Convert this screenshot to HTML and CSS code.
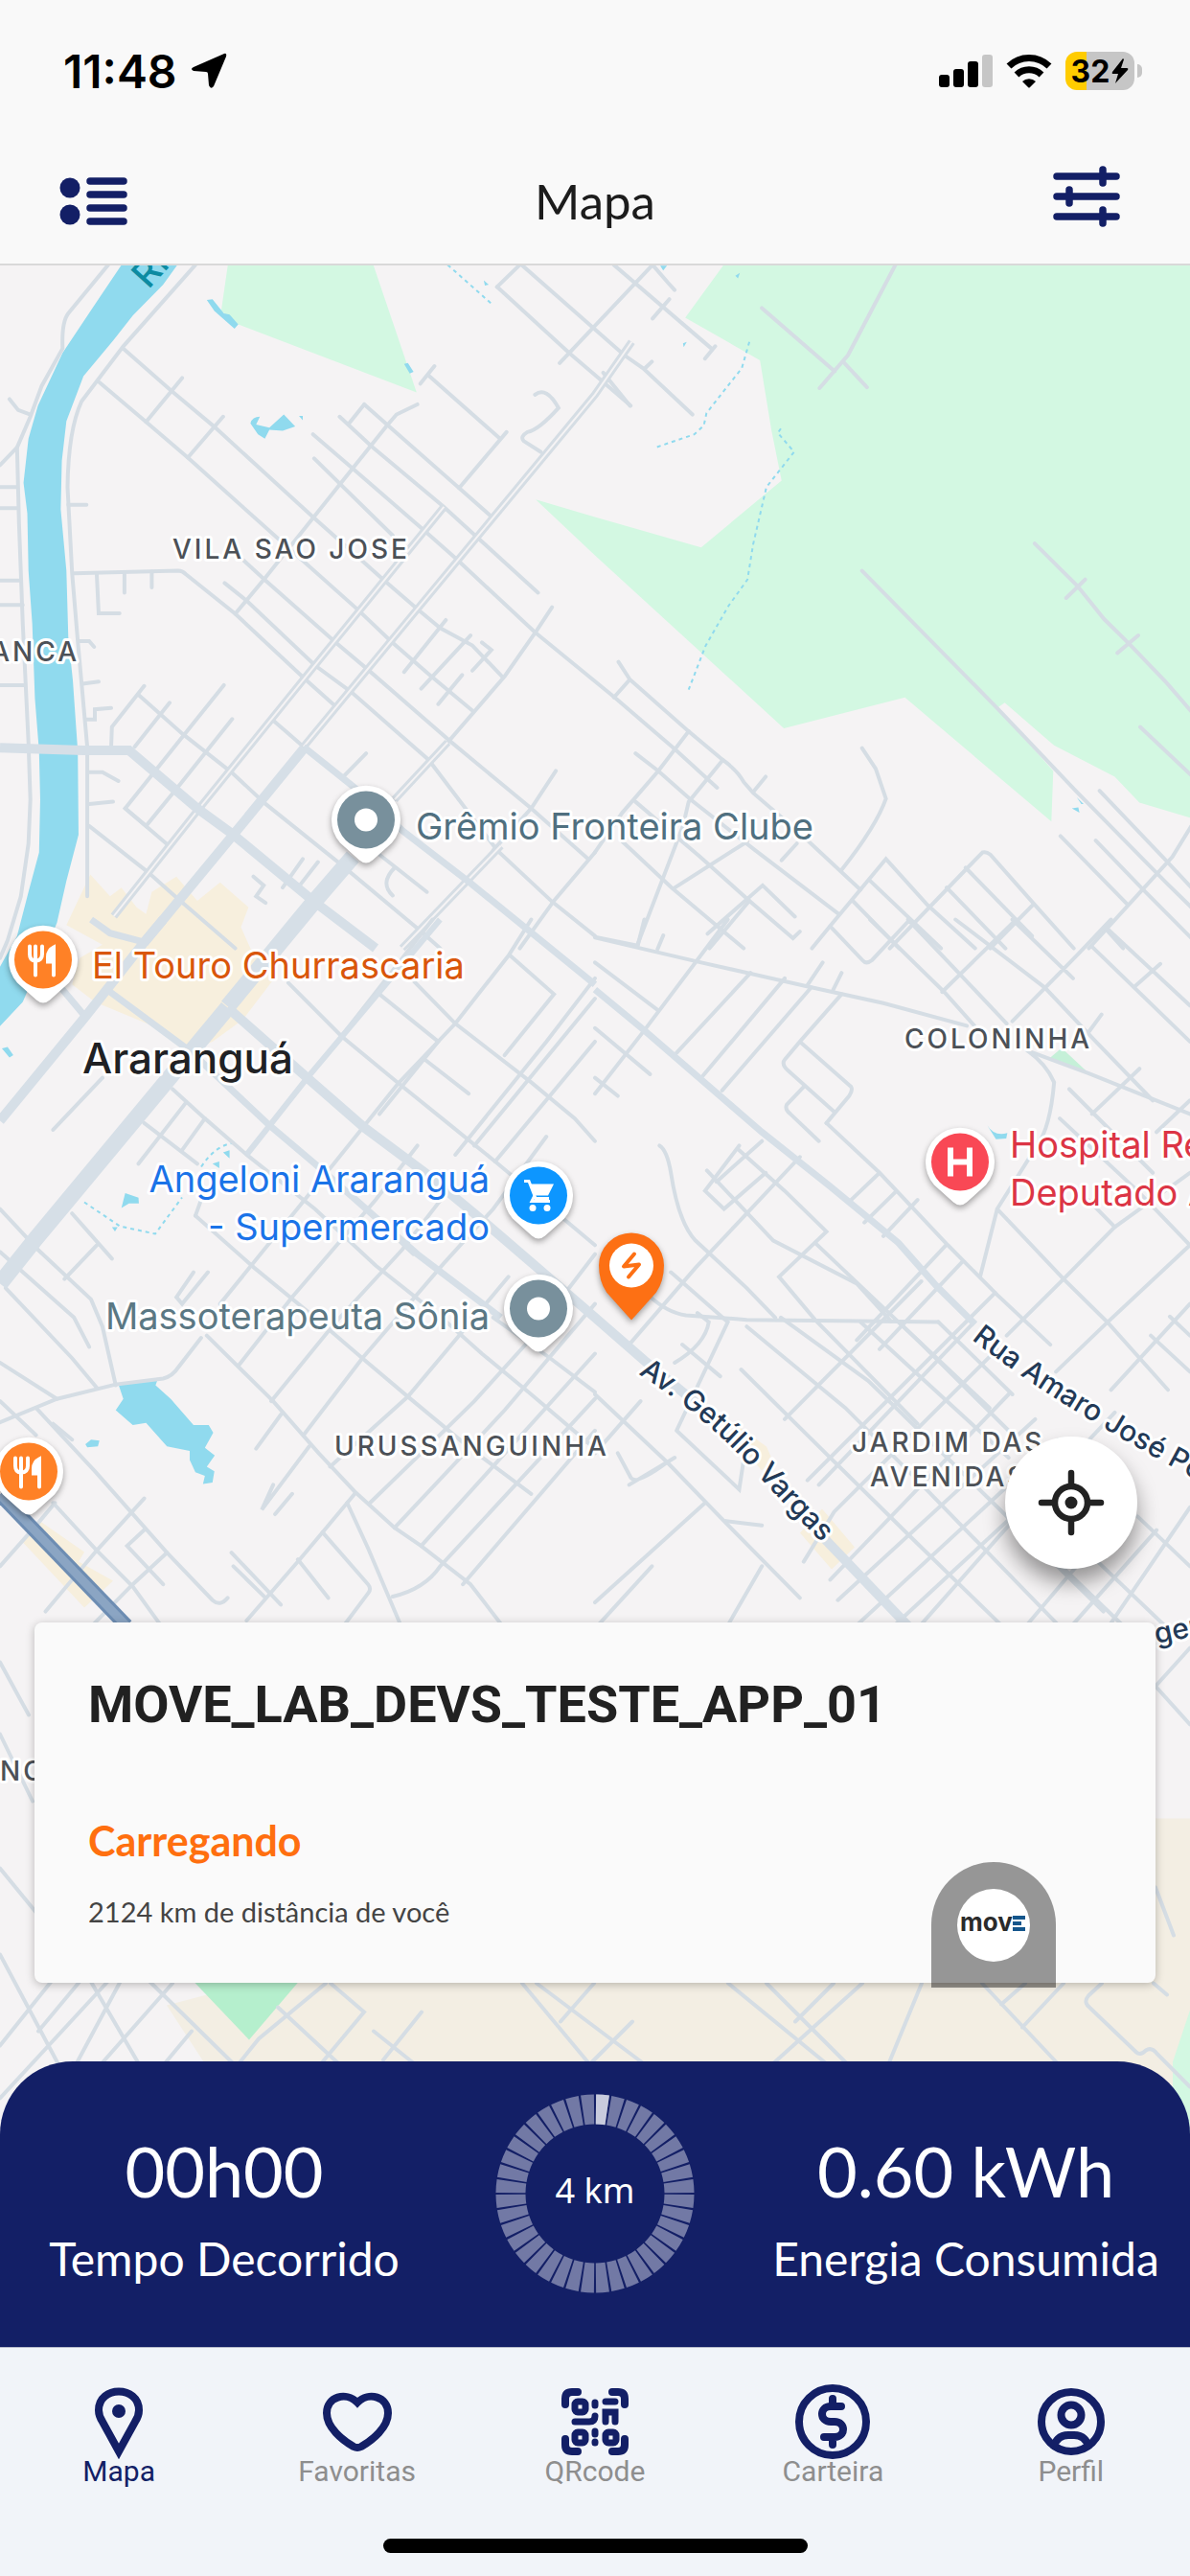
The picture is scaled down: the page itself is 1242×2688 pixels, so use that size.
FILE: index.html
```
<!DOCTYPE html>
<html lang="pt-br">
<head>
<meta charset="UTF-8" />
<meta name="viewport" content="width=device-width, initial-scale=1" />
<title>Mapa</title>
<link rel="stylesheet" href="styles.css">
</head>
<body>
  <div class="app">
    <div class="status-bar">
      <div class="status-left">
        <span class="time">11:48</span>
        <svg width="38" height="38" viewBox="0 0 38 38"><path d="M35 1 Q38 0 37 4 L24 35 Q21 39 19 34 L18 22 Q18 20 16 20 L3 19 Q-1 17 3 15Z" fill="#000" /></svg>
      </div>
      <div class="status-right">
        <svg width="56" height="36" viewBox="0 0 56 36">
          <rect x="0" y="22" width="11" height="13" rx="3" />
          <rect x="15" y="16" width="11" height="19" rx="3" />
          <rect x="30" y="8" width="11" height="27" rx="3" />
          <rect x="45" y="1" width="11" height="34" rx="3" fill="#c6c6c6" />
        </svg>
        <svg width="48" height="36" viewBox="0 0 48 36">
          <path d="M3 13 A30 30 0 0 1 45 13" fill="none" stroke="#000" stroke-width="7" />
          <path d="M11 22 A19 19 0 0 1 37 22" fill="none" stroke="#000" stroke-width="7" />
          <path d="M17 29 A10 10 0 0 1 31 29 L25 35 Q24 36 23 35Z" />
        </svg>
        <span class="battery">
          <span class="battery-level">32</span>
          <svg width="18" height="26" viewBox="0 0 18 26"><path d="M12 0 L1 14 Q0 16 2 16 H7 L4 26 L17 12 Q18 10 16 10 H10 L13 1Z" /></svg>
        </span>
      </div>
    </div>

    <header class="header">
      <button class="icon-btn" aria-label="Lista">
        <svg width="72" height="72" viewBox="0 0 72 72">
          <g fill="#131f66"><circle cx="11" cy="27" r="10.5" /><circle cx="11" cy="55" r="10.5" /></g>
          <path d="M32 20 H67 M32 34 H67 M32 48 H67 M32 62 H67" stroke="#131f66" stroke-width="7.5" stroke-linecap="round" />
        </svg>
      </button>
      <h1>Mapa</h1>
      <button class="icon-btn" aria-label="Filtros">
        <svg width="72" height="72" viewBox="0 0 72 72">
          <path d="M5 15 H67 M5 36 H67 M5 57 H67 M53 8 V22 M18 29 V43 M53 50 V64" stroke="#131f66" stroke-width="7.5" stroke-linecap="round" />
        </svg>
      </button>
    </header>

    <main class="map">
      <svg class="map-canvas" viewBox="0 277 1242 1951" preserveAspectRatio="xMidYMid slice" role="img" aria-label="Mapa de Araranguá">
        <defs>
          <path id="pin" d="M-27 24 L-7 42 Q0 48 7 42 L27 24 A36 36 0 1 0 -27 24Z" />
          <g id="fork" fill="none" stroke="#fff" stroke-width="4" stroke-linecap="round">
            <path d="M-14 -14 V-6 Q-14 1 -8 1 Q-1 1 -1 -6 V-14 M-8 -14 V16" />
            <path d="M11 16 V-13 Q5 -10 5 -3 V2 H11" fill="#fff" />
          </g>
          <path id="getulio" d="M666 1434 Q735 1478 780 1528 T870 1622" />
          <path id="amaro" d="M1014 1398 Q1110 1474 1290 1566" />
        </defs>

        <rect y="270" width="1242" height="1970" fill="#f5f3f4" />

        <!-- parks and blocks -->
        <g transform="translate(0 270) scale(.396 .4592)">
          <path class="park" d="M603 0 L583 120 L628 150 L1098 305 L978 0Z" />
          <path class="park" d="M1920 0 L1806 135 L2003 232 L2033 390 L2060 505 L1848 657 L1568 588 L1412 548 L1568 675 L1853 900 L2066 1068 L2385 998 L2771 1280 L2776 1165 L2628 1022 L2648 1010 L2778 1107 L2938 1178 L3003 1237 L3140 1272 V0Z" />
          <path class="block" d="M238 1400 L290 1450 L320 1430 L360 1475 L385 1490 L400 1440 L465 1405 L520 1460 L580 1418 L655 1475 L635 1520 L660 1568 L720 1640 L640 1730 L560 1780 L500 1800 L390 1740 L250 1690 L190 1650 L210 1590 L270 1560 L175 1515Z" />
        </g>
        <path class="block" d="M772 1490 L800 1510 L806 1524 L795 1535 L770 1505Z M858 1575 L892 1615 L868 1638 L835 1600Z" />
        <path class="block" d="M42 1588 L88 1620 L82 1630 L118 1650 L88 1678 L24 1610Z" />
        <path fill="#c5f0d8" d="M1108 1094 L1138 1122 L1094 1106Z" />
        <path fill="#f3eee3" d="M1206 1898 H1242 V2240 H270 L174 2093 L300 2060 H1206Z" />
        <path fill="#b5efcd" d="M202 2068 H312 L260 2129Z" />
        <path class="park" d="M1242 2098 L1224 2152 V2240 H1242Z" />

        <!-- water -->
        <g class="water" transform="translate(0 270) scale(.396 .4592)">
          <path d="M332 0 L250 105 L165 215 L100 335 L75 410 L62 510 L72 580 L75 710 L85 830 L92 1000 L103 1120 L106 1230 L103 1350 L75 1440 L45 1540 L0 1610 V1745 L60 1690 L150 1510 L175 1415 L207 1310 L205 1120 L192 960 L180 860 L175 710 L160 570 L163 460 L175 370 L220 268 L300 185 L350 130 L430 60 L480 0Z" />
          <path d="M545 95 L560 93 L590 125 L605 128 L628 150 L618 160 L565 120Z M1065 240 L1075 238 L1090 258 L1080 262Z" />
          <path d="M660 375 Q665 360 685 360 L675 378 L710 385 L748 355 L778 382 L745 392 L710 390 L698 410 L680 400Z M788 358 H798 V368Z" />
          <path d="M1275 50 L1288 60 L1278 62Z M1740 17 H1758 L1748 28Z M1938 40 L1950 33 L1945 46Z M1800 193 L1810 190 L1802 202Z M2825 1250 L2842 1248 L2845 1260Z M2838 1225 L2856 1240 L2850 1240Z" />
        </g>
        <g class="water" transform="translate(0 960) scale(.396 .4719)">
          <path d="M313 1030 L415 1018 L410 1030 L450 1060 L510 1118 H550 L562 1135 L540 1168 L566 1185 L545 1210 L565 1220 L560 1245 L535 1248 L540 1230 L515 1222 L500 1195 L500 1175 L440 1165 L385 1113 L350 1118 L305 1085 L325 1060Z" />
          <path d="M225 1160 L240 1150 L262 1152 L258 1165 L230 1167Z M320 638 L330 605 L365 615 L366 628 L340 628Z M5 285 L20 282 L35 300 L25 305Z M295 680 H310 L303 690Z M560 540 L578 535 V550Z M588 515 L605 510 V528Z" />
          <path d="M2602 455 Q2620 480 2655 472 L2652 484 L2625 486Z" />
        </g>
        <g class="creek" transform="translate(0 270) scale(.396 .4592)">
          <path d="M1180 15 L1295 103 M1975 190 L1955 250 L1900 310 L1862 352 L1855 380 L1830 400 L1728 430" />
          <path d="M2058 387 L2050 397 L2093 440 L2020 520 L1985 650 L1970 730 L1920 790 L1860 880 L1815 980" />
        </g>
        <path class="creek" d="M88 1255 L125 1280 L162 1288 L190 1250 M210 1218 Q225 1195 245 1193" />

        <!-- streets, north half -->
        <g class="streets" transform="translate(0 270) scale(.396 .4592)">
          <path d="M285 15 L180 125 Q162 145 165 205 L110 290 L80 360 L45 430 L50 600 L60 830 L75 1100 L80 1230 L75 1330 L55 1450 L20 1550 L0 1590" />
          <path d="M515 15 L325 200 L215 325 Q180 390 178 520 L190 715 L205 870 L230 1110 L230 1450" />
          <path d="M325 205 L450 300 L565 383 L825 588 L1010 730 L1100 797 L1160 840 L1245 880 L1325 952" />
          <path d="M262 282 L385 372 L495 453 L730 635 L945 800 L1030 870 L1130 945 L1245 1028" />
          <path d="M195 716 L470 710 Q480 710 490 718 L620 808 L805 957 L880 1015" />
          <path d="M640 685 L697 730 L885 873 L970 935 L1190 1100 L1400 1250 L1550 1365" />
          <path d="M592 738 L650 778 L830 925 L925 985 L1130 1140 L1310 1345 L1455 1462 L1568 1540" />
          <path d="M365 992 L480 1080 L610 1168 L700 1240 L895 1375 L1110 1530 L1160 1568 M720 1050 L800 1110" />
          <path d="M825 400 L930 478 L1120 620 L1205 685 L1410 850 L1620 998 L1778 1115 L1890 1203" />
          <path d="M895 360 L980 428 L1170 565 L1255 632 L1418 760 M960 332 L1020 378 L1210 522 L1290 583 M828 455 L1035 630 M1128 265 L1318 410" />
          <path d="M235 1290 L390 1395 L455 1445 L620 1568 M330 1250 L445 1335 M1310 65 L1500 215 L1568 265 L1662 335 M1375 15 L1645 220 L1695 250 L1825 355" />
          <path d="M480 272 L385 372 M588 360 L495 453 M1100 332 L1045 355 L1020 380 L890 520 L700 725 L620 808 M1370 15 L1310 65 M1720 15 L1475 238 M1145 245 L1108 285" />
          <path d="M380 972 L295 1065 L293 1110 M447 1010 L355 1110 M590 970 L330 1250 L385 1290 L475 1195 L612 1047 M960 332 L920 375" />
          <path d="M1175 822 L1065 940 M1240 857 L1110 978 M1218 947 L1155 1013 M1455 793 L1415 845 L1330 950 L1185 1095 L1040 1230" />
          <path d="M1465 1165 L1400 1250 L1300 1345 M965 1125 L905 1178 M1568 1350 L1460 1460 L1370 1568 M1335 395 L1210 522" />
          <path d="M1410 310 Q1440 290 1472 340 Q1420 390 1390 395 Q1370 405 1380 415 L1425 440 M1270 873 L1295 890 L1245 937" />
          <path d="M0 520 H45 M0 568 H45 M0 732 H55 M0 788 H60 M0 970 H65 M180 560 H228 M255 718 L260 807 H315 M328 718 V760 M400 712 V748 M210 870 H235 L248 883 M218 967 L260 962 M228 1048 H250 V1025 L293 1022 M0 470 L45 430 M80 355 L48 345 L25 320" />
          <path d="M235 1168 H270 L312 1188 M235 1240 L298 1235 M668 1405 L695 1425 L675 1450 L700 1465 M798 1365 L745 1430 M838 1372 L790 1425 M1040 1385 Q1000 1420 1035 1448 M1000 1355 L1125 1440" />
          <path d="M1618 15 L1875 205 M1764 93 L1720 137 M1885 200 L1858 228 M1720 15 L1760 55 L1778 72 M1590 260 L1660 335 M1700 250 L1718 235" />
          <path d="M2008 113 L2200 257 M2360 15 L2235 220 L2160 295 M2222 235 L2285 293" />
          <path d="M2272 710 L2628 1022 L2835 1210 L3075 1420 L3140 1475 M2727 648 L2840 745 L2910 820 L2975 875 L3075 965 L3140 1030 M2860 730 L2810 772 M3000 857 L2945 897 M3005 1065 L3140 1175" />
          <path d="M1630 917 L1660 957 L1618 998 M1660 957 L1815 1075 L1905 1140 Q1945 1165 1960 1190 L1985 1215 L2100 1300 L2268 1435" />
          <path d="M1815 1075 L1735 1165 L1640 1260 L1568 1350 M1905 1140 L1815 1235 L1800 1290 L1680 1560 M1675 1125 L1735 1165 L1820 1230 L1990 1345 L2210 1490 M2018 1178 L1985 1213" />
          <path d="M2272 1113 L2308 1160 L2335 1228 Q2310 1290 2218 1390 M1640 1325 L1770 1430 L1960 1568 M1675 1235 L1845 1360 L1975 1460 L2090 1545 L2108 1530 M1865 1535 L2010 1425 L2095 1496" />
          <path d="M1775 1432 L1970 1325 M1870 1568 L1975 1460 M2140 1568 L2190 1515 L2335 1365 L2445 1470 L2570 1568 M2290 1412 L2480 1568 M2245 1458 L2370 1568 M2060 1368 L2100 1330" />
          <path d="M2345 1568 L2550 1385 L2590 1350 Q2600 1348 2610 1355 L2725 1467 L2830 1568 M2545 1385 L2720 1540 M2495 1430 L2650 1568 M2725 1467 L2610 1568 M2870 1568 L3000 1445 L3090 1360 L3140 1290" />
          <path d="M2795 1313 L2970 1467 M2888 1323 L3010 1432 L3140 1545 M2898 1210 L3075 1370 L3140 1430 M1568 1542 L1680 1562 M2915 1525 L2960 1568" />
        </g>
        <g class="dual" transform="translate(0 270) scale(.396 .4592)">
          <path d="M300 1495 L525 1250 L830 925 L1170 565 M800 1110 L1100 797 L1568 310 L1665 190 M1180 1100 L1040 1230 M1320 1335 L1060 1568" />
          <path class="inner" d="M300 1495 L525 1250 L830 925 L1170 565 M800 1110 L1100 797 L1568 310 L1665 190 M1180 1100 L1040 1230 M1320 1335 L1060 1568" />
        </g>

        <!-- streets, south half -->
        <g class="streets" transform="translate(0 960) scale(.396 .4719)">
          <path d="M760 140 L900 258 L1050 362 L1180 450 L1305 535 L1568 720 M1000 165 L1155 270 L1000 430 M1120 310 L1235 385 M1060 110 L1200 230 L1400 360 L1515 440 L1568 490" />
          <path d="M455 375 L540 440 L650 520 L830 640 L990 765 L1170 885 L1270 960 L1400 1050 L1568 1170 M380 450 L520 540 M515 655 L670 770 L830 880 L955 970 L1075 1055 L1240 1170 L1400 1270" />
          <path d="M950 630 L1090 740 M1300 880 L1450 970 L1568 1045 M545 920 L720 1065 L840 1180 L935 1265 L1040 1345 L1110 1385 L1240 1470 L1330 1568" />
          <path d="M0 640 L100 730 L240 840 L270 900 L305 1030 M0 735 L195 880 L235 945 M15 815 L190 970 L255 1035 M0 980 L150 1060 M0 1065 L95 1140 M95 1080 L250 1220 L345 1310 L440 1400 L560 1505 Q580 1520 600 1500 M140 1290 L255 1395 L350 1475 L430 1568" />
          <path d="M0 1112 L150 1060 L305 1028 L430 1015 Q455 1010 470 990 L530 925 M0 1430 L95 1340 L145 1290 M120 1530 L255 1395 L380 1280 M235 1568 L350 1470 L440 1400 M650 1550 L790 1415 L850 1355 L935 1270" />
          <path d="M975 1290 L1110 1180 L1250 1065 L1390 935 L1568 740 M800 1140 L955 970 L1170 760 L1300 640 L1440 480 M870 1210 L1075 1055 L1240 890 L1340 790 M715 1065 L885 890 L1060 730 L1180 600 M630 985 L770 835 L990 620 L1100 500 M580 850 L735 690 L880 540 L1050 362 L1200 230 L1340 80 L1400 0" />
          <path d="M1040 1345 L1180 1220 L1330 1085 L1568 850 M1110 1385 L1568 960 M1160 1430 L1568 1060 M1220 1470 L1568 1130 M1160 1430 Q1120 1480 1035 1497 M915 1290 L970 1390 L1060 1568 M850 1355 L970 1470 Q980 1480 970 1490 L900 1568 M785 1415 L865 1500" />
          <path d="M900 258 L1140 0 M1200 520 L1440 270 L1568 130 M1250 500 L1568 175 M1305 535 L1568 270 M1345 80 L1460 165 L1330 300 M540 440 L480 510 M490 405 L365 540 M270 350 L140 465 M190 650 L295 750 M255 720 L170 795 M610 1400 L740 1515 M615 1430 L700 1500" />
          <path d="M510 780 L465 835 L480 850 L548 780 M720 1250 L690 1305 L815 1165 M725 1315 L770 1270 M740 1095 L675 1170 M380 1350 L335 1385 L430 1470 M530 620 L515 655 M140 1115 L190 1150" />
        </g>
        <g class="streets" transform="translate(621 960) scale(.396 .4719)">
          <path d="M0 40 L280 95 L570 150 L760 185 L980 235 M1140 290 L1300 340 L1568 430 M140 830 Q190 870 240 875 L400 885 L700 888 L905 890" />
          <path d="M620 15 L705 90 Q715 100 730 90 L830 0 M725 0 L920 160 L1000 235 M825 0 L1085 230 M950 0 L1185 150 L1320 270 L1470 400 M1100 0 L1260 130 M915 160 L1110 0 M1100 225 L1275 75 L1360 0 M1310 60 L1568 270 M1350 20 L1568 190 M1490 98 L1420 150" />
          <path d="M0 385 L130 245 L350 0 M215 295 L410 118 M285 345 L500 130 M335 378 L570 150 M650 165 L540 270 L500 310 Q490 320 510 335 L630 425 M540 270 L675 370 Q680 378 670 390 L610 450 M550 370 L505 410 Q500 420 515 430 L590 490" />
          <path d="M0 240 L145 342 M0 350 L60 390 M170 500 Q190 510 200 560 Q220 670 265 710 L400 815 L475 880 M0 95 L165 200 M380 500 L290 600 L340 640 L450 560 M440 490 L320 580 M295 555 L470 710 L690 805 L780 888 M380 510 L500 600 L610 690 L485 790 L580 885 L850 1115" />
          <path d="M540 525 L400 650 L265 770 L90 940 M580 715 L850 930 L1090 1130 M610 450 L750 560 L930 720 L1060 830 L1200 940 M750 560 L675 620 M795 600 L710 670 M850 620 L760 700 M925 720 L690 930 M970 755 L750 950 M860 800 L500 1105 M1055 825 L560 1240" />
          <path d="M1000 890 L590 1250 M1060 950 L630 1310 L550 1420 M1090 1050 L620 1460 M1160 1105 L640 1505 M1220 1150 L680 1568 M1280 1180 L780 1568 M1370 1090 L1090 1340 L850 1568 M1480 1350 L1250 1568 M1400 1300 L1130 1568 M1568 1300 L1350 1568" />
          <path d="M385 995 L620 1190 L850 1380 L1080 1568 M400 900 L660 1080 L850 1240 L1230 1568 M490 880 L720 1020 L940 1200 L1340 1530 M700 890 L1090 1190 M800 890 L1040 1080 M905 890 L1100 1050 M1300 1400 L1510 1568 M1180 1390 L1400 1568 M1430 1320 L1568 1430" />
          <path d="M1210 360 Q1200 460 1165 500 L1060 640 L1015 790 M1140 290 Q1190 320 1210 360 M1568 560 L1370 680 L1235 795 L1085 920 M1060 640 L1235 795 L1350 890 L1510 1040 M1568 720 L1345 895 L1215 1000 M1568 850 L1360 1040 M1515 878 L1568 920 M1465 920 L1568 1000" />
          <path d="M1568 400 L1480 470 M1435 330 L1310 430 M1335 210 L1300 250 M1250 375 L1470 560 M1225 440 L1430 600 L1568 720 M1370 680 L1300 620 M0 1050 L190 1200 L340 1330 L540 1500 M0 1510 L290 1290 M0 1180 L120 1065 M90 1250 L210 1190 M60 1180 L95 1235 Q110 1250 190 1200" />
          <path d="M0 1568 L150 1430 M345 1568 L440 1430 M200 780 L350 890 L215 1130 M270 870 L300 890 Q290 940 210 980 M230 940 L330 1010 M215 1130 L380 1260 L400 1150 M600 95 L560 145 M650 118 L628 155 M180 35 L165 65 M440 1340 L345 1330 M130 0 L112 60" />
        </g>
        <g class="streets">
          <path d="M0 1735 L30 1790 M0 1810 L34 1880 M0 1950 L90 2060 L188 2228 M0 2040 L100 2228 M60 2060 L0 2135 M130 2060 L40 2228 M0 2190 L120 2060 M180 2070 L30 2240 M150 2062 L260 2170 M200 2120 L110 2228 M90 2060 L40 2120" />
          <path d="M340 2070 L270 2128 L220 2190 M345 2070 L380 2100 L330 2160 M290 2095 L360 2160 M390 2120 L440 2160 M440 2100 L400 2150 M545 2070 L620 2160 M560 2070 L680 2160 M620 2070 L585 2110 M660 2110 L610 2160" />
          <path d="M760 2070 L870 2160 M800 2070 L860 2130 L890 2160 M900 2070 L800 2160 M870 2070 L830 2110 M962 2070 L925 2160 M1025 2070 L1105 2155 M1070 2070 L1045 2092 M1110 2070 L1067 2116 M1206 1970 L1225 2020 M1206 1760 L1242 1720 M1206 1760 L1242 1800" />
          <path d="M1150 2070 L1136 2083 Q1130 2090 1138 2096 L1186 2142 Q1190 2146 1196 2140 Q1202 2136 1208 2144 L1242 2178 M1204 2070 L1218 2082" />
        </g>

        <!-- avenues -->
        <g class="avenue" transform="translate(0 270) scale(.396 .4592)">
          <path class="w8" d="M0 1112 L220 1118 H340 L520 1250 L615 1310 L825 1460 L990 1568 M380 1555 L615 1310 L800 1115" />
          <path class="w5" d="M800 1110 L930 1200 L1060 1300 L1240 1420 L1568 1650" />
          <path class="w13" d="M600 1700 L820 1470 L930 1360" />
        </g>
        <g class="avenue" transform="translate(0 960) scale(.396 .4719)">
          <path class="w5" d="M160 150 L225 215 M240 0 L290 30 L380 50 M290 160 L500 290 L710 455 L830 540 L1100 740 L1320 880" />
          <path class="w8" d="M430 0 L380 50 L225 215 L0 445 M600 195 L810 350 L960 460 L1120 560 L1250 650 L1430 780 L1568 880 L1698 975 L1850 1080" />
          <path class="w8" d="M2140 1340 L2400 1568" />
          <path class="w13" d="M600 195 L95 705 L0 805" />
          <path class="w5" d="M1568 155 L1698 245 L2008 470 L2188 590 L2368 715 L2468 810 L2570 895" />
          <path class="w3" d="M650 520 L810 350 L1160 0" />
        </g>

        <path d="M0 1560 L132 1697" stroke="#6d8db3" stroke-width="15" />
        <path d="M0 1560 L132 1697" stroke="#8ba5c3" stroke-width="9" />

        <!-- labels -->
        <g class="district">
          <text x="180" y="583">VILA SAO JOSE</text>
          <text x="83" y="690" text-anchor="end">BARRANCA</text>
          <text x="944" y="1094">COLONINHA</text>
          <text x="349" y="1519">URUSSANGUINHA</text>
          <text x="889" y="1515">JARDIM DAS</text>
          <text x="908" y="1551">AVENIDAS</text>
          <text x="0" y="1858">NC</text>
        </g>
        <text class="city" x="86" y="1120">Araranguá</text>
        <g class="poi">
          <text x="434" y="876" fill="#507080">Grêmio Fronteira Clube</text>
          <text x="96" y="1021" fill="#d9560b">El Touro Churrascaria</text>
          <text x="511" y="1244" fill="#1a73e8" text-anchor="end">Angeloni Araranguá</text>
          <text x="511" y="1294" fill="#1a73e8" text-anchor="end">- Supermercado</text>
          <text x="511" y="1387" fill="#5b7884" text-anchor="end">Massoterapeuta Sônia</text>
          <text x="1054" y="1208" fill="#dc3545">Hospital Regional</text>
          <text x="1054" y="1258" fill="#dc3545">Deputado Affonso</text>
        </g>
        <g class="road-name">
          <text><textPath href="#getulio">Av. Getúlio Vargas</textPath></text>
          <text><textPath href="#amaro">Rua Amaro José Pereira</textPath></text>
          <text x="1207" y="1716" transform="rotate(-12 1207 1716)">gen</text>
        </g>
        <text class="river-name" x="155" y="303" transform="rotate(-48 155 303)">Rio</text>

        <!-- pins -->
        <g class="pin" transform="translate(382 856)">
          <use href="#pin" /><circle r="30" fill="#78909c" /><circle r="12" fill="#fff" />
        </g>
        <g class="pin" transform="translate(562 1366)">
          <use href="#pin" /><circle r="30" fill="#78909c" /><circle r="12" fill="#fff" />
        </g>
        <g class="pin" transform="translate(45 1002)">
          <use href="#pin" /><circle r="30" fill="#ff8126" /><use href="#fork" />
        </g>
        <g class="pin" transform="translate(30 1536)">
          <use href="#pin" /><circle r="30" fill="#ff8126" /><use href="#fork" />
        </g>
        <g class="pin" transform="translate(562 1248)">
          <use href="#pin" /><circle r="30" fill="#0d96ff" />
          <path d="M-15 -15 H-10 L-3 3 H11" fill="none" stroke="#fff" stroke-width="3" />
          <path d="M-9 -12 H16 L10 0 H-4Z" fill="#fff" />
          <path d="M-4 0 L-7 6 H12" fill="none" stroke="#fff" stroke-width="3" />
          <circle cx="-6" cy="13" r="3.5" fill="#fff" /><circle cx="9" cy="13" r="3.5" fill="#fff" />
        </g>
        <g class="pin" transform="translate(1002 1213)">
          <use href="#pin" /><circle r="30" fill="#f94855" />
          <path d="M-10 -15 V15 M10 -15 V15 M-10 0 H10" stroke="#fff" stroke-width="6" />
        </g>
        <g class="pin charger" transform="translate(659 1321)">
          <path d="M0 57 Q-10 46 -26 28 Q-34 16 -34 0 A34 34 0 0 1 34 0 Q34 16 26 28 Q10 46 0 57Z" />
          <circle r="23" fill="#fff" />
          <path d="M3 -12 L-8 1 L8 -1 L-3 12" fill="none" stroke="#fd7014" stroke-width="4" stroke-linecap="round" stroke-linejoin="round" />
        </g>
      </svg>

      <div class="map-overlay">
        <button class="locate" aria-label="Minha localização">
          <svg width="72" height="72" viewBox="0 0 72 72" fill="none" stroke="#222" stroke-width="6.5" stroke-linecap="round">
            <circle cx="36" cy="36" r="17" />
            <circle cx="36" cy="36" r="6.5" fill="#222" stroke="none" />
            <path d="M36 5 V18 M36 54 V67 M5 36 H18 M54 36 H67" />
          </svg>
        </button>

        <section class="station">
          <h2>MOVE_LAB_DEVS_TESTE_APP_01</h2>
          <p class="station-status">Carregando</p>
          <p class="station-distance">2124 km de distância de você</p>
          <div class="station-brand">
            <svg width="78" height="78" viewBox="0 0 78 78">
              <circle cx="39" cy="39" r="38" fill="#fff" />
              <text x="4" y="45" class="brand-name">mov</text>
              <path d="M59 31 H72 M59 37 H68 M59 43 H72" stroke="#14568c" stroke-width="4" />
            </svg>
          </div>
        </section>
      </div>
    </main>

    <section class="session">
      <div class="metric">
        <strong>00h00</strong>
        <span>Tempo Decorrido</span>
      </div>
      <div class="ring">
        <svg width="208" height="208" viewBox="0 0 208 208" fill="none" stroke-width="31">
          <circle cx="104" cy="104" r="88" pathLength="560" stroke="#7279a5" stroke-dasharray="12 2" stroke-dashoffset="-1" transform="rotate(-90 104 104)" />
          <circle cx="104" cy="104" r="88" pathLength="560" stroke="#c8cbdd" stroke-dasharray="12 548" stroke-dashoffset="-1" transform="rotate(-90 104 104)" />
        </svg>
        <span class="ring-value">4 km</span>
      </div>
      <div class="metric">
        <strong>0.60 kWh</strong>
        <span>Energia Consumida</span>
      </div>
    </section>

    <nav class="tab-bar">
      <div class="tabs">
        <a class="tab active" href="#mapa">
          <svg width="78" height="78" viewBox="-39 -39 78 78">
            <path d="M0 31 L-17 0 Q-21 -6 -21 -12 C-21 -38 21 -38 21 -12 Q21 -6 17 0Z" />
            <circle cy="-11" r="7" class="solid" />
          </svg>
          Mapa
        </a>
        <a class="tab" href="#favoritas">
          <svg width="78" height="78" viewBox="-39 -39 78 78">
            <path d="M0 -20 C-12 -32 -32 -26 -32 -9 C-32 6 -16 19 -4 26 Q0 28 4 26 C16 19 32 6 32 -9 C32 -26 12 -32 0 -20Z" />
          </svg>
          Favoritas
        </a>
        <a class="tab" href="#qrcode">
          <svg width="78" height="78" viewBox="-39 -39 78 78">
            <path d="M-31 -18 V-24 Q-31 -31 -24 -31 H-18 M18 -31 H24 Q31 -31 31 -24 V-18 M31 18 V24 Q31 31 24 31 H18 M-18 31 H-24 Q-31 31 -31 24 V18" />
            <g class="qr">
              <rect x="-21" y="-21" width="11" height="11" rx="3" />
              <rect x="-21" y="11" width="11" height="11" rx="3" />
              <rect x="11" y="11" width="11" height="11" rx="3" />
              <path d="M0 -20 V-17 M0 -6 Q0 0 -6 0 H-21 M0 10 V13 M0 21 V22 M11 -21 H21 M11 0 V-10 H21 V0" />
            </g>
          </svg>
          QRcode
        </a>
        <a class="tab" href="#carteira">
          <svg width="78" height="78" viewBox="-39 -39 78 78">
            <circle r="35" />
            <path d="M9 -16 H-2 C-14 -16 -14 0 -2 0 H2 C14 0 14 16 2 16 H-9 M0 -24 V-16 M0 16 V24" />
          </svg>
          Carteira
        </a>
        <a class="tab" href="#perfil">
          <svg width="78" height="78" viewBox="-39 -39 78 78">
            <circle r="31" />
            <circle cy="-7" r="10.5" />
            <path d="M-18 25 Q-14 14 -3 14 H3 Q14 14 18 25" />
          </svg>
          Perfil
        </a>
      </div>
      <div class="home-indicator"></div>
    </nav>
  </div>
</body>
</html>
```

FILE: styles.css
```
* {
  box-sizing: border-box;
}
body {
  margin: 0;
  font-family: Lato, sans-serif;
  background: #f9f9f9;
  color: #1c1c1c;
}
h1, h2, p {
  margin: 0;
}
button {
  padding: 0;
  border: none;
  background: none;
  cursor: pointer;
}
svg {
  display: block;
}
.app {
  display: flex;
  flex-direction: column;
  min-height: 100vh;
}

/* Status bar */
.status-bar {
  display: flex;
  justify-content: space-between;
  align-items: center;
  height: 148px;
  padding: 0 58px 0 66px;
  font-family: Inter, sans-serif;
  color: #000;
}
.status-left,
.status-right {
  display: flex;
  align-items: center;
  gap: 14px;
}
.time {
  font-size: 48px;
  font-weight: 600;
}
.battery {
  position: relative;
  display: flex;
  align-items: center;
  justify-content: center;
  gap: 2px;
  width: 72px;
  height: 40px;
  border-radius: 12px;
  background: linear-gradient(90deg, #ffcc00 31%, #c6c6c6 31%);
}
.battery::after {
  content: "";
  position: absolute;
  right: -8px;
  width: 5px;
  height: 14px;
  border-radius: 0 8px 8px 0;
  background: #c6c6c6;
}
.battery-level {
  font-size: 32px;
  font-weight: 700;
}

/* Header */
.header {
  display: grid;
  grid-template-columns: 1fr auto 1fr;
  align-items: center;
  height: 129px;
  padding: 0 72px 14px 62px;
  border-bottom: 2px solid #d9d9d9;
}
.header h1 {
  padding: 10px 0 0 10px;
  font-size: 51px;
  font-weight: 400;
}
.icon-btn {
  justify-self: start;
}
.icon-btn:last-child {
  justify-self: end;
}

/* Map */
.map {
  position: relative;
  flex: 1;
  display: flex;
  flex-direction: column;
  justify-content: flex-end;
}
.map-canvas {
  position: absolute;
  inset: 0;
  width: 100%;
  height: 100%;
}
.park {
  fill: #d3f8e2;
}
.block {
  fill: #f7efdd;
}
.water {
  fill: #90daee;
}
.creek {
  fill: none;
  stroke: #90daee;
  stroke-width: 2px;
  stroke-dasharray: 4 4;
}
.map-canvas path {
  vector-effect: non-scaling-stroke;
}
.streets {
  fill: none;
  stroke: #d5dde4;
  stroke-width: 4px;
  stroke-linecap: round;
}
.dual {
  fill: none;
  stroke: #d5dde4;
  stroke-width: 8px;
}
.dual .inner {
  stroke: #f5f3f4;
  stroke-width: 2px;
}
.avenue {
  fill: none;
  stroke: #d6dfe7;
}
.w3 { stroke-width: 6px; }
.w5 { stroke-width: 7px; }
.w8 { stroke-width: 10px; }
.w13 { stroke-width: 17px; }

.map-canvas text {
  font-family: Inter, sans-serif;
  paint-order: stroke;
  stroke: #fff;
  stroke-width: 6px;
  stroke-linejoin: round;
}
.district {
  font-size: 28px;
  font-weight: 500;
  letter-spacing: 3px;
  fill: #4c5157;
}
.city {
  font-size: 44px;
  font-weight: 500;
  fill: #202124;
}
.poi {
  font-size: 38px;
}
.road-name {
  font-size: 30px;
  font-weight: 500;
  fill: #233a57;
}
.map-canvas .river-name {
  font-size: 38px;
  font-weight: 500;
  fill: #0d8ba1;
  stroke: none;
}
.pin {
  fill: #fff;
  filter: drop-shadow(0 3px 3px rgba(0, 0, 0, 0.35));
}
.charger {
  fill: #fd7014;
}

.map-overlay {
  position: relative;
  display: flex;
  flex-direction: column;
  gap: 56px;
  padding: 0 36px 158px;
}
.locate {
  align-self: flex-end;
  display: flex;
  align-items: center;
  justify-content: center;
  width: 138px;
  height: 138px;
  margin-right: 19px;
  border-radius: 50%;
  background: #fff;
  box-shadow: 0 14px 22px rgba(0, 0, 0, 0.4);
}

/* Station card */
.station {
  position: relative;
  padding: 54px 56px 54px;
  border-radius: 8px;
  background: #fafafa;
  box-shadow: 0 2px 10px rgba(0, 0, 0, 0.25);
}
.station h2 {
  font-family: Roboto, sans-serif;
  font-size: 54px;
  font-weight: 700;
  line-height: 64px;
  color: #212121;
}
.station-status {
  margin-top: 84px;
  font-size: 43px;
  font-weight: 700;
  line-height: 52px;
  color: #ff6f0f;
}
.station-distance {
  margin-top: 28px;
  font-size: 29px;
  line-height: 40px;
  color: #444;
}
.station-brand {
  position: absolute;
  right: 104px;
  bottom: -5px;
  display: flex;
  justify-content: center;
  width: 130px;
  height: 131px;
  padding-top: 27px;
  border-radius: 65px 65px 0 0;
  background: rgba(0, 0, 0, 0.4);
}
.map-canvas ~ .map-overlay .brand-name {
  font-family: Inter, sans-serif;
  font-size: 26px;
  font-weight: 700;
  fill: #2b2b2b;
}

/* Charging session */
.session {
  position: relative;
  display: grid;
  grid-template-columns: 1fr 306px 1fr;
  height: 298px;
  margin-top: -76px;
  border-radius: 76px 76px 0 0;
  background: #131f66;
  color: #fff;
}
.metric {
  display: flex;
  flex-direction: column;
  align-items: center;
  padding-top: 70px;
}
.metric strong {
  font-size: 72px;
  font-weight: 400;
  line-height: 88px;
}
.metric span {
  margin-top: 18px;
  font-size: 48px;
  line-height: 60px;
  white-space: nowrap;
}
.ring {
  display: grid;
  justify-content: center;
  align-content: start;
  padding-top: 34px;
}
.ring svg,
.ring-value {
  grid-area: 1 / 1;
}
.ring-value {
  place-self: center;
  padding-bottom: 8px;
  font-family: "Noto Sans", sans-serif;
  font-size: 36px;
}

/* Tab bar */
.tab-bar {
  display: flex;
  flex-direction: column;
  justify-content: space-between;
  height: 239px;
  padding: 38px 0 24px;
  border-top: 1px solid #b8bccc;
  background: #f1f4f9;
}
.tabs {
  display: grid;
  grid-template-columns: repeat(5, 1fr);
}
.tab {
  display: flex;
  flex-direction: column;
  align-items: center;
  font-family: Roboto, sans-serif;
  font-size: 30px;
  line-height: 26px;
  color: #8e8e8e;
  text-decoration: none;
}
.tab svg {
  fill: none;
  stroke: #131f66;
  stroke-width: 8px;
  stroke-linecap: round;
}
.tab .solid {
  fill: #131f66;
  stroke: none;
}
.tab .qr {
  stroke-width: 7px;
}
.tab.active {
  color: #131f66;
}
.home-indicator {
  align-self: center;
  width: 443px;
  height: 15px;
  border-radius: 8px;
  background: #000;
}
```
